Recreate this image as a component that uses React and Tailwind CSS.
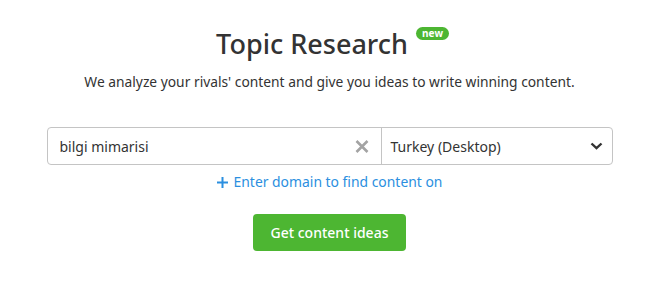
export default function App() {
  return (
    <div className="w-[659px] h-[296px] bg-white flex flex-col items-center" style={{ fontFamily: '"Noto Sans", "Open Sans", sans-serif' }}>
      <div className="relative mt-[24px] -ml-[35px]">
        <h1 className="text-[27px] leading-[40px] font-medium text-[#333333]">Topic Research</h1>
        <span className="absolute left-[200px] top-[3px] rounded-full bg-[#4db632] px-[6px] text-[10px] leading-[13px] font-bold text-white">new</span>
      </div>
      <p className="mt-[8px] text-[13.8px] leading-[20px] text-[#333333]">
        We analyze your rivals' content and give you ideas to write winning content.
      </p>
      <div className="mt-[35px] w-[566px] h-[38px] flex border border-[#c4c4c4] rounded-[4px]">
        <div className="w-[334px] flex items-center justify-between pl-[12px] pr-[12px] border-r border-[#c4c4c4]">
          <span className="text-[14px] text-[#333333]">bilgi mimarisi</span>
          <svg width="14" height="13" viewBox="0 0 14 13">
            <path d="M1.5 1 L12.5 12 M12.5 1 L1.5 12" stroke="#a3a3a3" strokeWidth="2.6" />
          </svg>
        </div>
        <div className="flex-1 flex items-center justify-between pl-[9px] pr-[9px]">
          <span className="text-[14px] text-[#333333]">Turkey (Desktop)</span>
          <svg width="13" height="8" viewBox="0 0 13 8">
            <path d="M1.5 1.5 L6.5 6.2 L11.5 1.5" fill="none" stroke="#333333" strokeWidth="2.4" />
          </svg>
        </div>
      </div>
      <div className="mt-[8px] flex items-center gap-[6px] text-[#2b8fe0]">
        <svg width="11" height="11" viewBox="0 0 11 11">
          <path d="M5.5 0 V11 M0 5.5 H11" stroke="#2b8fe0" strokeWidth="2" />
        </svg>
        <span className="text-[13.9px] leading-[18px]">Enter domain to find content on</span>
      </div>
      <button className="mt-[23px] w-[153px] h-[37px] rounded-[4px] bg-[#4db632] text-white text-[14px] font-medium">
        Get content ideas
      </button>
    </div>
  );
}
